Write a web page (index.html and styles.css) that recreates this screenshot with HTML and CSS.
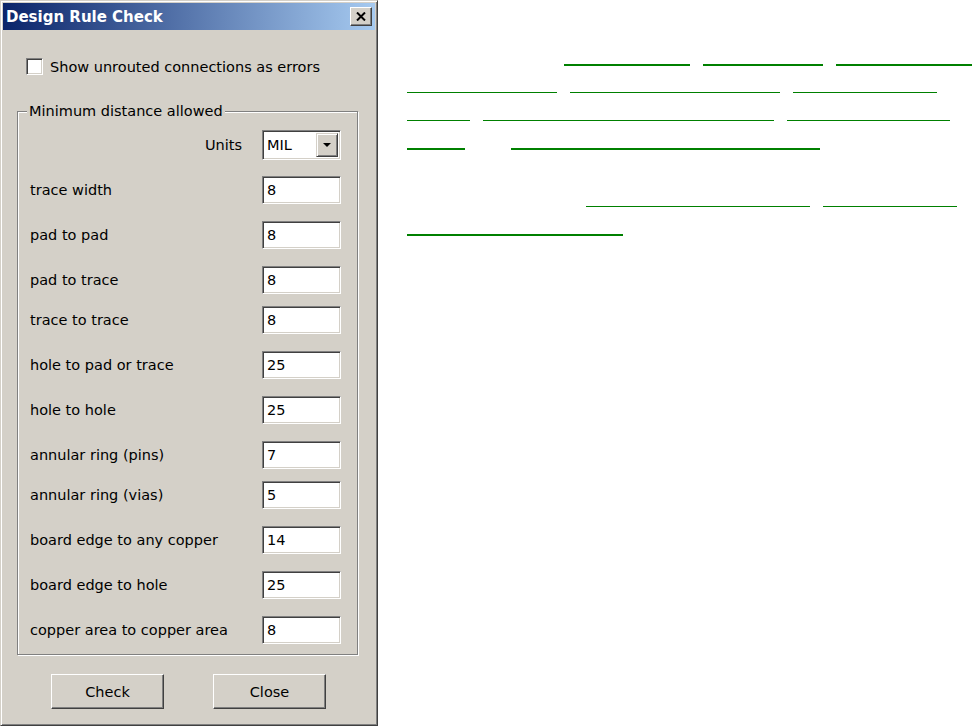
FILE: index.html
```html
<!DOCTYPE html>
<html lang="en">
<head>
  <meta charset="UTF-8" />
  <title>Design Rule Check</title>
  <link rel="stylesheet" href="styles.css">
</head>
<body>
  <div class="page">
    <div class="dialog">
      <div class="titlebar">
        <span class="title">Design Rule Check</span>
        <button class="close-btn" title="Close">
          <svg width="10" height="9" viewBox="0 0 10 9">
            <path d="M1 0.5 L9 8.5 M9 0.5 L1 8.5" stroke="#000" stroke-width="2" fill="none" />
          </svg>
        </button>
      </div>

      <div class="dialog-body">
        <label class="check-row">
          <span class="checkbox"></span>
          <span>Show unrouted connections as errors</span>
        </label>

        <fieldset class="group">
          <legend>Minimum distance allowed</legend>
          <div class="rows">
            <div class="row units-row">
              <span>Units</span>
              <div class="select">
                <span>MIL</span>
                <span class="drop-btn">
                  <svg width="8" height="4" viewBox="0 0 8 4"><path d="M0 0 H8 L4 4 Z" fill="#000" /></svg>
                </span>
              </div>
            </div>
            <div class="row"><span>trace width</span><input class="num" type="text" value="8" /></div>
            <div class="row"><span>pad to pad</span><input class="num" type="text" value="8" /></div>
            <div class="row"><span>pad to trace</span><input class="num" type="text" value="8" /></div>
            <div class="row tight"><span>trace to trace</span><input class="num" type="text" value="8" /></div>
            <div class="row"><span>hole to pad or trace</span><input class="num" type="text" value="25" /></div>
            <div class="row"><span>hole to hole</span><input class="num" type="text" value="25" /></div>
            <div class="row"><span>annular ring (pins)</span><input class="num" type="text" value="7" /></div>
            <div class="row tight"><span>annular ring (vias)</span><input class="num" type="text" value="5" /></div>
            <div class="row"><span>board edge to any copper</span><input class="num" type="text" value="14" /></div>
            <div class="row"><span>board edge to hole</span><input class="num" type="text" value="25" /></div>
            <div class="row"><span>copper area to copper area</span><input class="num" type="text" value="8" /></div>
          </div>
        </fieldset>

        <div class="buttons">
          <button class="btn">Check</button>
          <button class="btn">Close</button>
        </div>
      </div>
    </div>

    <div class="links">
      <div class="para">
        <div class="line thick">
          <a class="link" style="margin-left:157px;width:126px"></a>
          <a class="link" style="width:120px"></a>
          <a class="link" style="width:140px"></a>
        </div>
        <div class="line">
          <a class="link" style="width:150px"></a>
          <a class="link" style="width:210px"></a>
          <a class="link" style="width:144px"></a>
        </div>
        <div class="line">
          <a class="link" style="width:63px"></a>
          <a class="link" style="width:291px"></a>
          <a class="link" style="width:163px"></a>
        </div>
        <div class="line thick">
          <a class="link" style="width:58px"></a>
          <a class="link" style="margin-left:33px;width:309px"></a>
        </div>
      </div>
      <div class="para">
        <div class="line">
          <a class="link" style="margin-left:179px;width:224px"></a>
          <a class="link" style="width:134px"></a>
        </div>
        <div class="line thick">
          <a class="link" style="width:216px"></a>
        </div>
      </div>
    </div>
  </div>
</body>
</html>
```

FILE: styles.css
```css
body {
  margin: 0;
  background: white;
  font-family: "DejaVu Sans", sans-serif;
  font-size: 14.5px;
  overflow: hidden;
}
.page {
  display: flex;
  width: 972px;
  height: 726px;
}

/* dialog window */
.dialog {
  flex: none;
  width: 378px;
  height: 726px;
  box-sizing: border-box;
  padding: 2px;
  background: #d4d0c8;
  border: 1px solid;
  border-color: #d4d0c8 #404040 #404040 #d4d0c8;
  box-shadow: inset 1px 1px #fff, inset -1px -1px #808080;
  display: flex;
  flex-direction: column;
}
.titlebar {
  height: 27px;
  display: flex;
  align-items: center;
  justify-content: space-between;
  padding: 0 3px;
  background: linear-gradient(to right, #0a246a, #a6caf0);
}
.title {
  color: white;
  font-weight: bold;
  font-size: 15px;
  padding-top: 1px;
}
.close-btn {
  width: 22px;
  height: 19px;
  padding: 0;
  display: flex;
  align-items: center;
  justify-content: center;
  background: #d4d0c8;
  border: 1px solid;
  border-color: #fff #404040 #404040 #fff;
  box-shadow: inset -1px -1px #808080;
}

.dialog-body {
  flex: 1;
  display: flex;
  flex-direction: column;
}
.check-row {
  display: flex;
  align-items: center;
  gap: 7px;
  margin: 28px 0 0 23px;
  height: 17px;
  color: #000;
}
.checkbox {
  width: 17px;
  height: 17px;
  box-sizing: border-box;
  background: white;
  border: 1px solid;
  border-color: #808080 #fff #fff #808080;
  box-shadow: inset 1px 1px #404040, inset -1px -1px #d4d0c8;
}

.group {
  margin: 28px 0 0 14px;
  width: 341px;
  box-sizing: border-box;
  padding: 0;
  border: 1px solid #808080;
  box-shadow: inset 1px 1px #fff, 1px 1px #fff;
}
.group legend {
  margin-left: 9px;
  padding: 0 2px;
  line-height: 17px;
  background: #d4d0c8;
}
.rows {
  display: flex;
  flex-direction: column;
  gap: 17px;
  padding: 11px 16px 10px 12px;
}
.row {
  height: 28px;
  display: flex;
  align-items: center;
  justify-content: space-between;
}
.row.tight {
  margin-top: -5px;
}
.units-row {
  justify-content: flex-end;
  gap: 20px;
}
.num {
  width: 79px;
  height: 28px;
  box-sizing: border-box;
  margin: 0;
  padding: 0 4px;
  font: inherit;
  color: #000;
  background: white;
  border: 1px solid;
  border-color: #808080 #fff #fff #808080;
  box-shadow: inset 1px 1px #404040, inset -1px -1px #d4d0c8;
  outline: none;
}
.select {
  width: 79px;
  height: 30px;
  box-sizing: border-box;
  padding: 2px 2px 2px 4px;
  display: flex;
  align-items: center;
  justify-content: space-between;
  background: white;
  border: 1px solid;
  border-color: #808080 #fff #fff #808080;
  box-shadow: inset 1px 1px #404040, inset -1px -1px #d4d0c8;
}
.drop-btn {
  width: 22px;
  height: 24px;
  box-sizing: border-box;
  display: flex;
  align-items: center;
  justify-content: center;
  background: #d4d0c8;
  border: 1px solid;
  border-color: #d4d0c8 #404040 #404040 #d4d0c8;
  box-shadow: inset 1px 1px #fff, inset -1px -1px #808080;
}

.buttons {
  display: flex;
  gap: 49px;
  margin: 19px 0 0 48px;
}
.btn {
  width: 113px;
  height: 35px;
  font: inherit;
  color: #000;
  background: #d4d0c8;
  border: 1px solid;
  border-color: #fff #404040 #404040 #fff;
  box-shadow: inset -1px -1px #808080;
}

/* page text on the right: only the link underlines show */
.links {
  flex: 1;
  padding: 38px 0 0 29px;
  overflow: hidden;
}
.para {
  margin-bottom: 30px;
}
.line {
  height: 28px;
  display: flex;
  align-items: flex-end;
  gap: 13px;
  white-space: nowrap;
}
.link {
  flex: none;
  height: 0;
  margin-bottom: 1px;
  border-bottom: 1px solid #008000;
}
.line.thick .link {
  margin-bottom: 0;
  border-bottom-width: 2px;
}
```
